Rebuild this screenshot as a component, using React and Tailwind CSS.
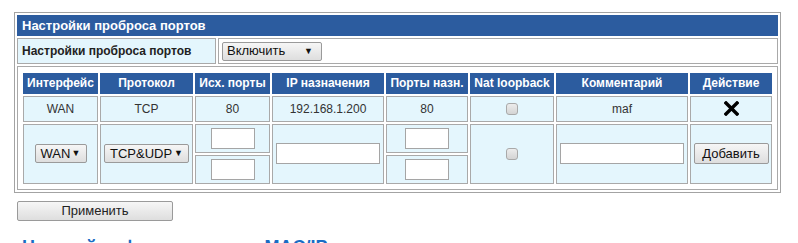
const headers = ['Интерфейс', 'Протокол', 'Исх. порты', 'IP назначения', 'Порты назн.', 'Nat loopback', 'Комментарий', 'Действие'];

function FakeSelect({ label, className }) {
  return (
    <div
      className={`flex items-center justify-between rounded-[2px] border border-[#9a9a9a] bg-gradient-to-b from-[#f6f6f6] to-[#dedede] px-[5px] text-[13px] text-[#111] ${className}`}
    >
      <span>{label}</span>
      <span className="text-[9px] leading-none">▼</span>
    </div>
  );
}

function TextBox({ className }) {
  return <div className={`border border-[#a5a5a5] bg-white ${className}`} />;
}

function Checkbox() {
  return (
    <div className="h-[12px] w-[12px] rounded-[3px] border border-[#a9a9a9] bg-gradient-to-b from-[#ececec] to-[#d4d4d4]" />
  );
}

function Cell({ children, className = '' }) {
  return (
    <div className={`flex items-center justify-center border border-[#a9a9a9] bg-[#e4f6fd] text-[12px] text-[#333] ${className}`}>
      {children}
    </div>
  );
}

export default function App() {
  return (
    <div className="h-[243px] w-[798px] overflow-hidden bg-white pl-[14px] pt-[12px] font-['Liberation_Sans',Arial,sans-serif]">
      <div className="flex w-[767px] flex-col gap-[2px] border border-[#a3a3a3] p-[2px]">
        <div className="flex h-[21px] items-center bg-[#2c5c9f] pl-[5px] text-[13px] font-bold text-white">
          Настройки проброса портов
        </div>

        <div className="flex h-[26px] gap-[2px]">
          <div className="flex w-[199px] items-center border border-[#a9a9a9] bg-[#e4f6fd] pl-[4px] text-[12px] font-bold text-[#222]">
            Настройки проброса портов
          </div>
          <div className="flex flex-1 items-center border border-[#a9a9a9] bg-white pl-[3px]">
            <FakeSelect label="Включить" className="h-[19px] w-[100px] pl-[4px] pr-[8px]" />
          </div>
        </div>

        <div className="flex h-[124px] items-center border border-[#a9a9a9] px-[3px]">
          <div className="grid grid-cols-[75px_93px_75px_112px_82px_84px_132px_82px] grid-rows-[21px_26px_29px_29px] gap-[2px] p-[2px]">
            {headers.map((h) => (
              <div key={h} className="flex items-center justify-center bg-[#2c5c9f] text-[12px] font-bold text-white">
                {h}
              </div>
            ))}

            <Cell>WAN</Cell>
            <Cell>TCP</Cell>
            <Cell>80</Cell>
            <Cell>192.168.1.200</Cell>
            <Cell>80</Cell>
            <Cell><Checkbox /></Cell>
            <Cell>maf</Cell>
            <Cell>
              <svg width="15" height="15" viewBox="0 0 15 15">
                <path d="M2 2 L13 13 M13 2 L2 13" stroke="#000" strokeWidth="3.4" strokeLinecap="square" />
              </svg>
            </Cell>

            <Cell className="row-span-2">
              <FakeSelect label="WAN" className="h-[19px] w-[52px]" />
            </Cell>
            <Cell className="row-span-2">
              <FakeSelect label="TCP&UDP" className="h-[19px] w-[85px]" />
            </Cell>
            <Cell>
              <TextBox className="h-[21px] w-[44px]" />
            </Cell>
            <Cell className="row-span-2">
              <TextBox className="h-[21px] w-[104px]" />
            </Cell>
            <Cell>
              <TextBox className="h-[21px] w-[44px]" />
            </Cell>
            <Cell className="row-span-2"><Checkbox /></Cell>
            <Cell className="row-span-2">
              <TextBox className="h-[21px] w-[124px]" />
            </Cell>
            <Cell className="row-span-2">
              <div className="flex h-[21px] w-[75px] items-center justify-center rounded-[2px] border border-[#9a9a9a] bg-gradient-to-b from-[#f6f6f6] to-[#dedede] text-[13px] text-[#111]">
                Добавить
              </div>
            </Cell>
            <Cell>
              <TextBox className="h-[21px] w-[44px]" />
            </Cell>
            <Cell>
              <TextBox className="h-[21px] w-[44px]" />
            </Cell>
          </div>
        </div>
      </div>

      <div className="ml-[3px] mt-[8px] flex h-[20px] w-[156px] items-center justify-center rounded-[2px] border border-[#9a9a9a] bg-gradient-to-b from-[#f6f6f6] to-[#dedede] text-[13px] text-[#222]">
        Применить
      </div>

      <div className="ml-[8px] mt-[16px] text-[18px] font-bold leading-[20px] text-[#1a6cc4]">
        Настройки фильтрации по MAC/IP
      </div>
    </div>
  );
}
